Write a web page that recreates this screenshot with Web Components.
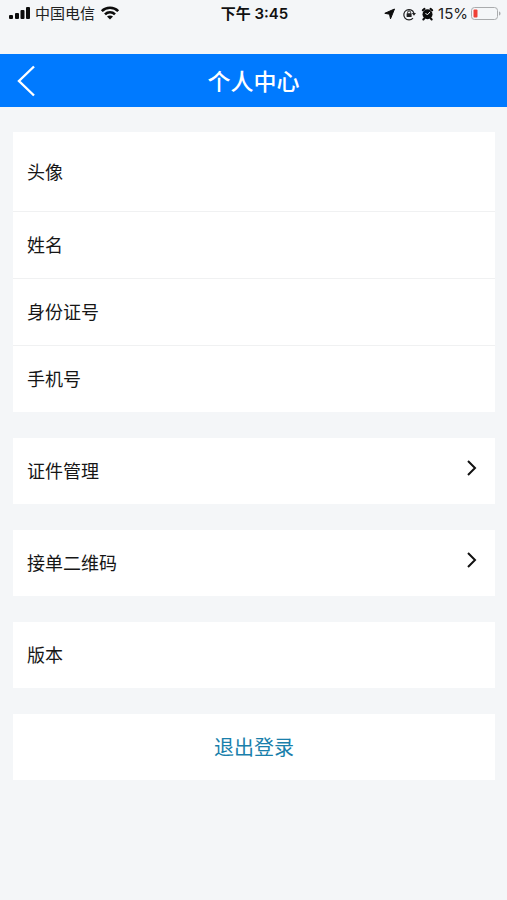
<!DOCTYPE html>
<html lang="zh-CN">
<head>
<meta charset="utf-8">
<meta name="viewport" content="width=device-width, initial-scale=1">
<title>个人中心</title>
<style>
  body {
    margin: 0;
    min-height: 100vh;
    background: #f4f6f8;
    color: #161616;
    font-family: "Liberation Sans", "Noto Sans CJK SC", sans-serif;
    font-size: 18px;
  }
</style>
</head>
<body>

<template id="status-bar-template">
  <style>
  :host {
    display: grid;
    grid-template-columns: 1fr auto 1fr;
    align-items: center;
    height: 28px;
    padding: 0 6px 0 8px;
    margin-bottom: 26px;
    font-family: Inter, "Noto Sans CJK SC", sans-serif;
    font-size: 15px;
    line-height: 28px;
    color: #222;
  }
  .side {
    display: flex;
    align-items: center;
    gap: 5px;
  }
  .right {
    justify-content: flex-end;
    gap: 3px;
  }
  .time {
    color: #111;
    font-size: 15px;
    font-weight: 600;
  }
  svg {
    display: block;
    flex: none;
  }
  </style>
  <div class="side">
    <svg width="22" height="16" viewBox="0 0 22 16" fill="#0c0c0c" aria-hidden="true">
      <rect x="1" y="9" width="4" height="4" rx="1"/>
      <rect x="7" y="7" width="4" height="6" rx="1"/>
      <rect x="12.500" y="4" width="4" height="9" rx="1"/>
      <rect x="18" y="1" width="4" height="12" rx="1"/>
    </svg>
    <slot name="carrier"></slot>
    <svg width="20" height="16" viewBox="0 0 20 16" fill="none" stroke="#0c0c0c" stroke-width="2.600" aria-hidden="true">
      <path d="M1.800 5.100C6.300.600 13.700.600 18.200 5.100"/>
      <path d="M5 8.400c2.800-2.800 7.200-2.800 10 0"/>
      <path d="M10 13.600L7 10.600c1.700-1.600 4.300-1.600 6 0z" fill="#0c0c0c" stroke="none"/>
    </svg>
  </div>
  <div class="time"><slot name="time"></slot></div>
  <div class="side right">
    <svg width="15" height="12" viewBox="0 0 15 12" aria-hidden="true">
      <path d="M10.500 1L6.500 10.800 5.500 6.200.800 5.300z" fill="#0c0c0c" stroke="#0c0c0c" stroke-linejoin="round"/>
    </svg>
    <svg width="16" height="14" viewBox="0 0 16 14" fill="none" stroke="#222" aria-hidden="true">
      <path d="M11 11.100A5.200 5.200 0 1 1 11.900 6" stroke-width="1.200"/>
      <path d="M9.800 6h4.200L12 8.700z" fill="#222" stroke="none"/>
      <rect x="4.600" y="6.300" width="5" height="3.700" rx=".5" fill="#222" stroke="none"/>
      <path d="M5.600 6.500V5.400a1.500 1.500 0 0 1 3 0v1.100"/>
    </svg>
    <svg width="14" height="14" viewBox="0 0 14 14" aria-hidden="true">
      <circle cx="6.500" cy="7.300" r="5" fill="#0c0c0c"/>
      <path d="M1.800 3.300L3.500 1.800M11.200 3.300L9.500 1.800M3.300 11.300L2.300 12.500M9.700 11.300L10.700 12.500" stroke="#0c0c0c" stroke-width="2" stroke-linecap="round"/>
      <path d="M9 4.900L6.700 7.600 4.400 6.500" fill="none" stroke="#f4f6f8"/>
    </svg>
    <slot name="charge"></slot>
    <svg width="30" height="14" viewBox="0 0 30 14" aria-hidden="true">
      <rect x=".5" y=".5" width="26" height="12" rx="3" fill="none" stroke="#a9abad"/>
      <path d="M28 4.500c2 .6 2 3.400 0 4z" fill="#a9abad"/>
      <rect x="2.500" y="2.500" width="4" height="8" rx="1" fill="#ef4036"/>
    </svg>
  </div>
</template>

<template id="nav-header-template">
  <style>
  :host {
    display: grid;
    grid-template-columns: 52px 1fr 52px;
    align-items: center;
    height: 53px;
    background: #007aff;
    color: #fff;
  }
  button {
    display: flex;
    align-items: center;
    justify-content: center;
    height: 53px;
    padding: 0;
    border: 0;
    background: none;
    color: inherit;
    cursor: pointer;
  }
  h1 {
    margin: 0;
    padding-top: 2px;
    font-size: 23px;
    font-weight: 500;
    line-height: 32px;
    text-align: center;
  }
  </style>
  <button type="button" aria-label="返回">
    <svg width="20" height="32" viewBox="0 0 20 32" fill="none" stroke="currentColor" stroke-width="2.400" aria-hidden="true">
      <path d="M18 1.500L3 16l15 14.500"/>
    </svg>
  </button>
  <h1><slot></slot></h1>
</template>

<template id="info-card-template">
  <style>
  :host {
    display: block;
    background: #fff;
  }
  ::slotted(:not(:last-child)) {
    border-bottom: 1px solid #f0f1f2;
  }
  </style>
  <slot></slot>
</template>

<template id="info-row-template">
  <style>
  :host {
    display: flex;
    align-items: center;
    box-sizing: content-box;
    min-height: 64px;
    padding: 2px 14px 0;
    line-height: 26px;
  }
  :host([tall]) {min-height: 77px;}
  </style>
  <slot></slot>
</template>

<template id="link-row-template">
  <style>
  :host {display: block;}
  a {
    display: flex;
    align-items: center;
    justify-content: space-between;
    min-height: 64px;
    padding: 2px 16px 0 14px;
    color: inherit;
    line-height: 26px;
    text-decoration: none;
  }
  </style>
  <a href="#">
    <slot></slot>
    <!-- the arrow sits a little above the middle of the row -->
    <svg width="14" height="24" viewBox="0 0 14 24" fill="none" stroke="#111" stroke-width="2" aria-hidden="true">
      <path d="M3 1l7 7-7 7"/>
    </svg>
  </a>
</template>

<template id="logout-button-template">
  <style>
  :host {display: block;}
  button {
    display: block;
    width: 100%;
    min-height: 66px;
    padding: 2px 0 0;
    border: 0;
    background: #fff;
    color: #1a7fab;
    font: inherit;
    font-size: 20px;
    line-height: 28px;
    cursor: pointer;
  }
  </style>
  <button type="button"><slot></slot></button>
</template>

<template id="profile-page-template">
  <style>
  :host {display: block;}
  main {
    display: flex;
    flex-direction: column;
    gap: 26px;
    padding: 25px 12px 26px 13px;
  }
  </style>
  <status-bar>
    <span slot="carrier">中国电信</span>
    <span slot="time">下午 3:45</span>
    <span slot="charge">15%</span>
  </status-bar>
  <nav-header>个人中心</nav-header>
  <main>
    <info-card>
      <info-row tall>头像</info-row>
      <info-row>姓名</info-row>
      <info-row>身份证号</info-row>
      <info-row>手机号</info-row>
    </info-card>
    <info-card><link-row>证件管理</link-row></info-card>
    <info-card><link-row>接单二维码</link-row></info-card>
    <info-card><info-row>版本</info-row></info-card>
    <logout-button>退出登录</logout-button>
  </main>
</template>

<profile-page></profile-page>

<script>
  {
    'use strict';
    class TemplateElement extends HTMLElement {
      constructor() {
        super();
        const template = document.getElementById(`${this.localName}-template`);
        this.attachShadow({mode: 'open'}).appendChild(template.content.cloneNode(true));
      }
    }

    class StatusBar extends TemplateElement {}

    class NavHeader extends TemplateElement {
      constructor() {
        super();
        this.shadowRoot.querySelector('button').addEventListener('click', () => history.back());
      }
    }

    class InfoCard extends TemplateElement {}
    class InfoRow extends TemplateElement {}

    class LinkRow extends TemplateElement {
      connectedCallback() {
        if (this.hasAttribute('href')) {
          this.shadowRoot.querySelector('a').href = this.getAttribute('href');
        }
      }
    }

    class LogoutButton extends TemplateElement {
      constructor() {
        super();
        this.shadowRoot.querySelector('button').addEventListener('click', () => {
          this.dispatchEvent(new CustomEvent('logout', {bubbles: true, composed: true}));
        });
      }
    }

    class ProfilePage extends TemplateElement {}

    customElements.define('status-bar', StatusBar);
    customElements.define('nav-header', NavHeader);
    customElements.define('info-card', InfoCard);
    customElements.define('info-row', InfoRow);
    customElements.define('link-row', LinkRow);
    customElements.define('logout-button', LogoutButton);
    customElements.define('profile-page', ProfilePage);
  }
</script>
</body>
</html>
